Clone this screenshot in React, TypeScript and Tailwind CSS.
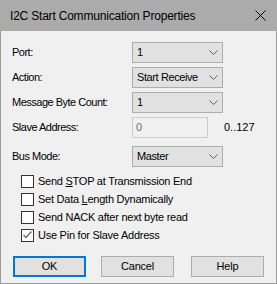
import React from 'react';

const font = { fontFamily: '"Liberation Sans", Arial, sans-serif' };

function Chevron() {
  return (
    <svg width="9" height="5" viewBox="0 0 9 5" className="shrink-0">
      <path d="M0.5 0.5 L4.5 4.5 L8.5 0.5" fill="none" stroke="#606060" strokeWidth="1" />
    </svg>
  );
}

function Combo({ value }: { value: string }) {
  return (
    <div className="flex h-[21px] w-[91px] items-center justify-between border border-[#adadad] bg-[#e1e1e1] pl-[4px] pr-[4px] text-[11px] tracking-[-0.4px] text-black">
      <span>{value}</span>
      <Chevron />
    </div>
  );
}

function Check({ label, checked }: { label: React.ReactNode; checked?: boolean }) {
  return (
    <div className="flex h-[18px] items-center">
      <div className="flex h-[13px] w-[13px] shrink-0 items-center justify-center border border-[#333333] bg-white">
        {checked && (
          <svg width="9" height="8" viewBox="0 0 9 8">
            <path d="M0.5 4 L3 6.5 L8.5 0.5" fill="none" stroke="#6d6d6d" strokeWidth="1.4" />
          </svg>
        )}
      </div>
      <span className="ml-[4px] text-[11px] tracking-[-0.25px] text-black">{label}</span>
    </div>
  );
}

function Button({ label, primary }: { label: string; primary?: boolean }) {
  return (
    <div
      className={`flex h-[21px] w-[73px] items-center justify-center bg-[#e1e1e1] text-[11px] tracking-[-0.2px] text-black ${primary ? 'border-2 border-[#0078d7]' : 'border border-[#adadad]'}`}
    >
      {label}
    </div>
  );
}

export default function App() {
  const rows = ['Port:', 'Action:', 'Message Byte Count:'];
  const values = ['1', 'Start Receive', '1'];

  return (
    <div className="h-[284px] w-[277px] overflow-hidden bg-[#f0f0f0]" style={font}>
      <div className="flex h-[31px] items-center justify-between bg-[#ababab] pl-[10px] pr-[11px]">
        <span className="text-[12px] tracking-[-0.2px] text-black">I2C Start Communication Properties</span>
        <svg width="11" height="11" viewBox="0 0 11 11">
          <path d="M0.5 0.5 L10.5 10.5 M10.5 0.5 L0.5 10.5" stroke="#000" strokeWidth="1" />
        </svg>
      </div>

      <div className="flex h-[253px] flex-col border-x border-b border-[#9b9b9b] pl-[11px] pt-[11px]">
        {rows.map((r, i) => (
          <div key={r} className="mb-[4px] flex items-center">
            <span className="w-[120px] text-[11px] tracking-[-0.5px] text-black">{r}</span>
            <Combo value={values[i]} />
          </div>
        ))}

        <div className="mb-[8px] flex items-center">
          <span className="w-[120px] text-[11px] tracking-[-0.5px] text-black">Slave Address:</span>
          <div className="flex h-[21px] w-[76px] items-center border border-[#cccccc] bg-[#f0f0f0] pl-[3px] text-[11px] text-[#6d6d6d]">
            0
          </div>
          <span className="ml-[16px] text-[11px] text-black">0..127</span>
        </div>

        <div className="flex items-center">
          <span className="w-[120px] text-[11px] tracking-[-0.5px] text-black">Bus Mode:</span>
          <Combo value="Master" />
        </div>

        <div className="mt-[5px] flex flex-col pl-[9px]">
          <Check
            label={
              <>
                Send <span className="underline">S</span>TOP at Transmission End
              </>
            }
          />
          <Check
            label={
              <>
                Set Data <span className="underline">L</span>ength Dynamically
              </>
            }
          />
          <Check label="Send NACK after next byte read" />
          <Check label="Use Pin for Slave Address" checked />
        </div>

        <div className="mt-[12px] flex pl-[1px]">
          <Button label="OK" primary />
          <div className="ml-[15px]">
            <Button label="Cancel" />
          </div>
          <div className="ml-[17px]">
            <Button label="Help" />
          </div>
        </div>
      </div>
    </div>
  );
}
